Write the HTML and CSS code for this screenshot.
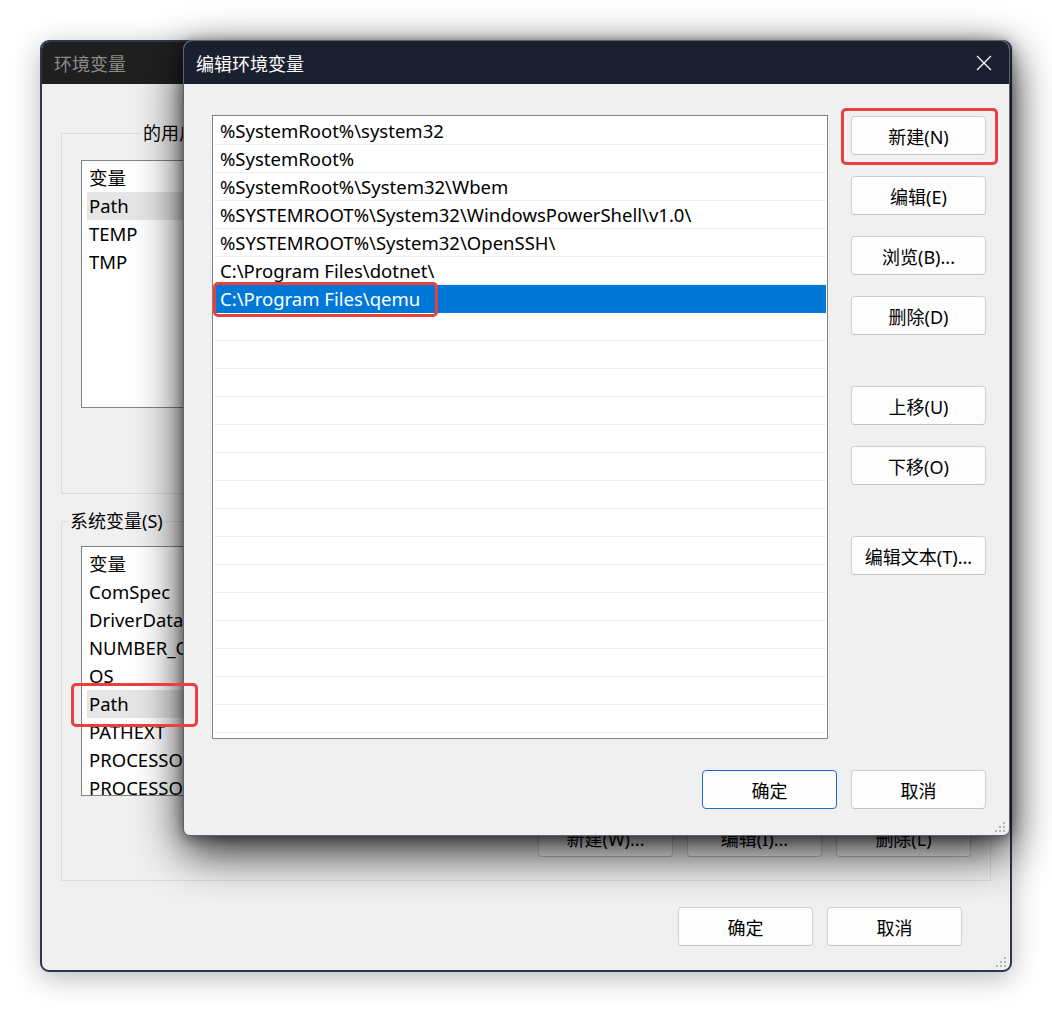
FILE: index.html
```html
<!DOCTYPE html>
<html lang="zh-CN">
<head>
<meta charset="utf-8">
<title>编辑环境变量</title>
<link rel="stylesheet" href="styles.css">
</head>
<body>
<div class="desk">
  <div class="win back">
    <div class="titlebar back-title"><span>环境变量</span></div>
    <div class="back-body">
      <div class="group group-user">
        <span class="legend legend-user">的用户变量(U)</span>
        <div class="vlist vlist-user">
          <div class="vrow">变量</div>
          <div class="vrow hl">Path</div>
          <div class="vrow">TEMP</div>
          <div class="vrow">TMP</div>
        </div>
      </div>
      <div class="group group-sys">
        <span class="legend legend-sys">系统变量(S)</span>
        <div class="vlist vlist-sys">
          <div class="vrow">变量</div>
          <div class="vrow">ComSpec</div>
          <div class="vrow">DriverData</div>
          <div class="vrow">NUMBER_OF_PROCESSORS</div>
          <div class="vrow">OS</div>
          <div class="vrow hl">Path</div>
          <div class="vrow">PATHEXT</div>
          <div class="vrow">PROCESSOR_ARCHITECTURE</div>
          <div class="vrow">PROCESSOR_IDENTIFIER</div>
        </div>
        <div class="btnrow">
          <button class="btn">新建(W)...</button>
          <button class="btn">编辑(I)...</button>
          <button class="btn">删除(L)</button>
        </div>
      </div>
      <div class="footer back-footer">
        <button class="btn">确定</button>
        <button class="btn">取消</button>
      </div>
    </div>
    <svg class="grip" width="10" height="10" viewBox="0 0 10 10"><g fill="#b8b8b8"><rect x="8" y="0" width="2" height="2"/><rect x="4" y="4" width="2" height="2"/><rect x="8" y="4" width="2" height="2"/><rect x="0" y="8" width="2" height="2"/><rect x="4" y="8" width="2" height="2"/><rect x="8" y="8" width="2" height="2"/></g></svg>
  </div>

  <div class="win front">
    <div class="titlebar front-title">
      <span>编辑环境变量</span>
      <svg class="close" width="16" height="16" viewBox="0 0 16 16"><path d="M1 1 L15 15 M15 1 L1 15" stroke="#ffffff" stroke-width="1.3" fill="none"/></svg>
    </div>
    <div class="front-body">
      <div class="main">
        <div class="plist">
          <div class="prow">%SystemRoot%\system32</div>
          <div class="prow">%SystemRoot%</div>
          <div class="prow">%SystemRoot%\System32\Wbem</div>
          <div class="prow">%SYSTEMROOT%\System32\WindowsPowerShell\v1.0\</div>
          <div class="prow">%SYSTEMROOT%\System32\OpenSSH\</div>
          <div class="prow">C:\Program Files\dotnet\</div>
          <div class="prow sel">C:\Program Files\qemu</div>
          <div class="prow"></div><div class="prow"></div><div class="prow"></div>
          <div class="prow"></div><div class="prow"></div><div class="prow"></div>
          <div class="prow"></div><div class="prow"></div><div class="prow"></div>
          <div class="prow"></div><div class="prow"></div><div class="prow"></div>
          <div class="prow"></div><div class="prow"></div><div class="prow"></div>
          <div class="prow"></div>
        </div>
        <div class="side">
          <button class="btn">新建(N)</button>
          <button class="btn">编辑(E)</button>
          <button class="btn">浏览(B)...</button>
          <button class="btn">删除(D)</button>
          <button class="btn gap">上移(U)</button>
          <button class="btn">下移(O)</button>
          <button class="btn gap">编辑文本(T)...</button>
        </div>
      </div>
      <div class="footer front-footer">
        <button class="btn default">确定</button>
        <button class="btn">取消</button>
      </div>
    </div>
    <svg class="grip" width="10" height="10" viewBox="0 0 10 10"><g fill="#b8b8b8"><rect x="8" y="0" width="2" height="2"/><rect x="4" y="4" width="2" height="2"/><rect x="8" y="4" width="2" height="2"/><rect x="0" y="8" width="2" height="2"/><rect x="4" y="8" width="2" height="2"/><rect x="8" y="8" width="2" height="2"/></g></svg>
  </div>

  <div class="mark mark-new"></div>
  <div class="mark mark-row"></div>
  <div class="mark mark-path"></div>
</div>
</body>
</html>
```
FILE: styles.css
```css
* { box-sizing: border-box; }
html, body { margin: 0; padding: 0; background: #ffffff; }
body {
  font-family: "Segoe UI", "Noto Sans", "Noto Sans CJK SC", sans-serif;
  font-size: 18px;
  color: #000;
}
.desk { position: relative; width: 1052px; height: 1012px; overflow: hidden; }

.win { position: absolute; background: #f0f0f0; }
.back {
  left: 40px; top: 40px; width: 972px; height: 932px;
  border: 2px solid #2c3650;
  border-radius: 9px;
  box-shadow: 0 6px 28px rgba(0,0,0,0.28);
  overflow: hidden;
  z-index: 1;
}
.front {
  left: 183px; top: 40px; width: 827px; height: 796px;
  border: 1px solid #5d6270;
  border-radius: 9px 9px 7px 7px;
  box-shadow: 0 16px 46px rgba(0,0,0,0.85), 0 2px 12px rgba(0,0,0,0.4);
  overflow: hidden;
  z-index: 2;
}
.titlebar {
  display: flex; align-items: center; justify-content: space-between;
  font-size: 18px;
}
.back-title { height: 42px; background: #1f1f1f; color: #8b8b8b; padding-left: 12px; }
.front-title { height: 43px; background: #1b2031; color: #ffffff; padding-left: 12px; padding-right: 17px; }
.close { display: block; }

.btn {
  font: inherit;
  font-size: 18px;
  background: #fdfdfd;
  border: 1px solid #d0d0d0;
  border-bottom-color: #c4c4c4;
  border-radius: 4px;
  width: 135px; height: 39px;
  padding: 0;
  color: #000;
  display: flex; align-items: center; justify-content: center;
}
.btn.default { border-color: #1c6fc4; }

/* background dialog */
.back-body { padding: 49px 18px 0 19px; }
.group { position: relative; border: 1px solid #dcdcdc; width: 930px; }
.group-user { height: 361px; padding: 26px 0 0 19px; }
.group-sys { height: 360px; margin-top: 27px; padding: 24px 19px 0 19px; }
.legend { position: absolute; top: -13px; background: #f0f0f0; padding: 0 2px; line-height: 24px; font-size: 18px; }
.legend-user { left: 79px; }
.legend-sys { left: 6px; }
.vlist { background: #fff; border: 1px solid #80828a; width: 889px; padding: 3px 4px 0 5px; overflow: hidden; }
.vlist-user { height: 248px; }
.vlist-sys { height: 250px; }
.vrow { height: 28px; line-height: 28px; padding-left: 2px; white-space: nowrap; font-size: 18.5px; }
.vrow.hl { background: #e6e6e6; }
.btnrow { display: flex; justify-content: flex-end; gap: 14px; margin-top: 22px; }
.back-footer { display: flex; justify-content: flex-end; gap: 14px; margin-top: 26px; padding-right: 30px; }

/* front dialog */
.front-body { padding: 31px 23px 0 28px; }
.main { display: flex; gap: 23px; }
.plist { width: 616px; height: 624px; background: #fff; border: 1px solid #80828a; padding: 1px 1px 0 1px; overflow: hidden; }
.prow { height: 28px; line-height: 27px; border-bottom: 1px solid #f0f0f0; padding-left: 6px; white-space: nowrap; font-size: 18.5px; }
.prow.sel { background: #0078d7; color: #fff; border-bottom-color: #0078d7; }
.side { display: flex; flex-direction: column; gap: 21px; padding-top: 1px; }
.side .gap { margin-top: 30px; }
.front-footer { display: flex; justify-content: flex-end; gap: 14px; margin-top: 31px; }

.grip { position: absolute; right: 4px; bottom: 3px; }

/* annotation marks */
.mark { position: absolute; border: 3px solid #e8403f; border-radius: 5px; z-index: 5; }
.mark-new { left: 841px; top: 108px; width: 157px; height: 57px; }
.mark-row { left: 213px; top: 282px; width: 225px; height: 35px; }
.mark-path { left: 71px; top: 683px; width: 127px; height: 44px; }
```
